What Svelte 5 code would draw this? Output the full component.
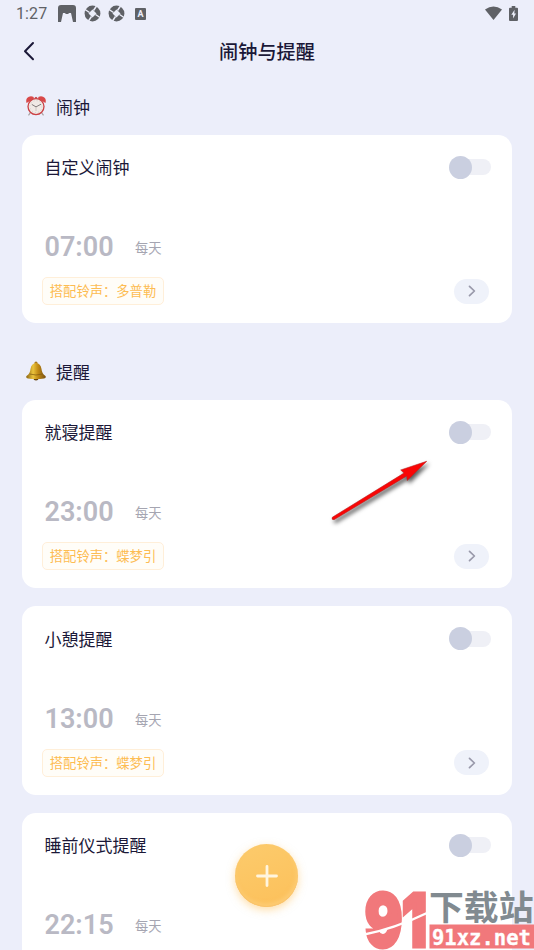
<script>
    let groups = [
        {
            icon: 'clock',
            title: '闹钟',
            items: [{ name: '自定义闹钟', time: '07:00', sound: '多普勒', on: false }]
        },
        {
            icon: 'bell',
            title: '提醒',
            items: [
                { name: '就寝提醒', time: '23:00', sound: '蝶梦引', on: false },
                { name: '小憩提醒', time: '13:00', sound: '蝶梦引', on: false },
                { name: '睡前仪式提醒', time: '22:15', sound: '蝶梦引', on: false }
            ]
        }
    ];

    function toggle(item) {
        item.on = !item.on;
        groups = groups;
    }
</script>

<div class="screen">
    <div class="status">
        <span class="clock">1:27</span>
        <svg class="cat" width="18" height="18" viewBox="0 0 18 18">
            <path d="M3 0h12q3 0 3 3v14h-3L13 8h-1.800L10 9H8L6.800 8H5L3 17H0V3q0-3 3-3z" fill="#5f6166" />
        </svg>
        {#each [1, 2] as n}
            <svg class="shutter" width="17" height="17" viewBox="0 0 17 17">
                <circle cx="8.500" cy="8.500" r="7.900" fill="#5f6166" />
                <path d="M8.500 4.500l4 4-4 4-4-4z" fill="#eceefa" />
                <path d="M1 4.500l4.500 3M12.500 1l-3 4.500M16 12.500l-4.500-3M4.500 16l3-4.500" stroke="#eceefa" stroke-width="1.500" />
            </svg>
        {/each}
        <span class="abox">A</span>
        <svg class="wifi" width="17" height="14" viewBox="0 0 17 14">
            <path d="M0 3.500Q8.500-2.500 17 3.500L8.500 14z" fill="#5f6166" />
        </svg>
        <svg width="9" height="15" viewBox="0 0 9 15">
            <path d="M1 1.800h1.700V0h3.600v1.800H8q1 0 1 1V14q0 1-1 1H1q-1 0-1-1V2.800q0-1 1-1z" fill="#5f6166" />
            <path d="M5.600 3.800L2.300 8.700h1.800v3.800l2.900-5H5.300z" fill="#eceefa" />
        </svg>
    </div>

    <header>
        <svg class="back" width="12" height="20" viewBox="0 0 12 20">
            <path d="M10 2L2 10.200l8 8" fill="none" stroke="#1b1838" stroke-width="2" stroke-linecap="round" stroke-linejoin="round" />
        </svg>
        <h1>闹钟与提醒</h1>
    </header>

    {#each groups as group}
        <section>
            <h2>
                {#if group.icon === 'clock'}
                    <svg width="20" height="20" viewBox="0 0 20 20">
                        <path d="M4.500 16.500L2.500 19.300M15.500 16.500l2 2.800" stroke="#a89f9f" stroke-width="1.200" />
                        <path d="M.5 7Q-1 .8 5 .2q2.800 0 3.300 2.300zM19.500 7Q21 .8 15 .2q-2.800 0-3.300 2.300z" fill="#d94848" />
                        <path d="M8.500 2L10 .8 11.500 2v2h-3z" fill="#bd3038" />
                        <circle cx="10" cy="10.600" r="8" fill="#f0e9e5" stroke="#cb4145" stroke-width="1.300" />
                        <circle cx="10" cy="10.600" r="6" fill="none" stroke="#c7beb9" stroke-width=".8" stroke-dasharray=".8 2.340" />
                        <path d="M5.800 8.400l4.200 2.500 5-2.700" fill="none" stroke="#67605f" stroke-width=".8" />
                        <path d="M10 11v4" stroke="#b9b0ad" stroke-width=".6" />
                    </svg>
                {:else}
                    <svg width="20" height="20" viewBox="0 0 20 20">
                        <defs>
                            <linearGradient id="gold">
                                <stop offset="0" stop-color="#8d6510" />
                                <stop offset=".35" stop-color="#eac33c" />
                                <stop offset=".6" stop-color="#c28b15" />
                                <stop offset="1" stop-color="#795012" />
                            </linearGradient>
                        </defs>
                        <circle cx="10" cy="2" r="1.600" fill="#a8791b" />
                        <ellipse cx="10" cy="17.700" rx="2.500" ry="1.800" fill="#66440d" />
                        <path d="M10 2Q5.300 2.500 4.500 8 4 13 .5 15q-1 2 1.500 2.400 8 1.400 16 0Q20.500 17 19.500 15 16 13 15.500 8 14.700 2.500 10 2z" fill="url(#gold)" />
                        <path d="M3.500 13q6.500 2 13 0" fill="none" stroke="#80590f" stroke-width=".7" />
                    </svg>
                {/if}
                {group.title}
            </h2>
            {#each group.items as item}
                <div class="card">
                    <div class="row">
                        <span class="name">{item.name}</span>
                        <button class="switch" class:on={item.on} aria-label={item.name} on:click={() => toggle(item)}>
                            <i></i>
                        </button>
                    </div>
                    <div class="when">
                        <span class="time">{item.time}</span>
                        <span class="repeat">每天</span>
                    </div>
                    <div class="row bottom">
                        <span class="tag">搭配铃声：{item.sound}</span>
                        <span class="more">
                            <svg width="8" height="12" viewBox="0 0 8 12">
                                <path d="M1.500 1.300L6.400 6l-4.900 4.700" fill="none" stroke="#9999aa" stroke-width="1.700" stroke-linecap="round" stroke-linejoin="round" />
                            </svg>
                        </span>
                    </div>
                </div>
            {/each}
        </section>
    {/each}

    <button class="add" aria-label="+">
        <svg width="22" height="22" viewBox="0 0 22 22">
            <path d="M11 1.500v19M1.500 11h19" stroke="#fff5df" stroke-width="2.800" stroke-linecap="round" />
        </svg>
    </button>

    <svg class="arrow" width="110" height="76" viewBox="325 455 110 76">
        <path d="M332.300 517.300l71.700-44.200-3.300-3.100 26-8.700-19.500 19.200-.4-4.600-72.800 43.800q-2.800.2-1.700-2.400z" fill="#f90505" stroke="#b22" stroke-width=".6" />
    </svg>

    <svg class="mark" width="172" height="64" viewBox="362 886 172 64">
        <text x="365" y="946" font-size="72" font-weight="800" font-family="Inter" fill="#f1787b" stroke="#f1787b" stroke-width="5" textLength="62" lengthAdjust="spacingAndGlyphs">91</text>
        <path d="M362 935q32-6 65-22" fill="none" stroke="#fff" stroke-width="2.500" />
        <text x="429" y="920" font-size="34.500" font-weight="bold" font-family="Noto Sans CJK SC" fill="#818a90" textLength="104.500" lengthAdjust="spacingAndGlyphs">下载站</text>
        <rect x="429.500" y="924.500" width="104.500" height="24" fill="#f1787b" />
        <text x="432" y="944.500" font-size="21" font-weight="bold" font-family="DejaVu Sans Mono" fill="#fff" stroke="#fff" stroke-width=".3" textLength="99" lengthAdjust="spacingAndGlyphs">91xz.net</text>
    </svg>
</div>

<style>
    :global(body) {
        background: #eceefa;
        overflow: hidden;
    }

    .screen {
        position: relative;
        height: 950px;
        overflow: hidden;
        background: #eceefa;
        color: #1b1838;
        font-family: Roboto, "Noto Sans CJK SC", sans-serif;
    }

    .status {
        display: flex;
        align-items: center;
        height: 27px;
        padding: 0 16px;
    }

    .clock {
        width: 42px;
        font-size: 16px;
        letter-spacing: 0.1px;
        color: #5f6166;
    }

    .shutter {
        margin-left: 7.5px;
    }

    .abox {
        width: 11px;
        height: 12px;
        margin-left: 10px;
        border-radius: 1px;
        background: #5f6166;
        color: #eceefa;
        font-size: 9px;
        font-weight: bold;
        line-height: 12px;
        text-align: center;
    }

    .wifi {
        margin-left: auto;
        margin-right: 7px;
        margin-bottom: 1px;
    }

    .status > :last-child {
        margin-bottom: 1px;
    }

    header {
        box-sizing: border-box;
        display: flex;
        align-items: center;
        height: 49.3px;
        padding: 0 23px 2px;
    }

    h1 {
        flex: 1;
        margin: 0 12px 0 0;
        font-size: 19.2px;
        font-weight: 500;
        text-align: center;
    }

    section {
        padding: 0 22px;
    }

    h2 {
        box-sizing: border-box;
        display: flex;
        align-items: center;
        gap: 10px;
        height: 58.7px;
        margin: 0;
        padding: 1px 4px 0;
        font-size: 17px;
        font-weight: 400;
    }

    h2 svg {
        flex: none;
    }

    .card {
        box-sizing: border-box;
        height: 188.4px;
        margin-bottom: 18px;
        padding: 16.4px 21px 0 20px;
        border-radius: 14px;
        background: #fff;
    }

    .row {
        display: flex;
        align-items: center;
        justify-content: space-between;
        height: 32px;
    }

    .name {
        padding: 0 0 1px 2.5px;
        font-size: 17px;
    }

    .switch {
        display: flex;
        align-items: center;
        width: 37px;
        height: 16px;
        padding: 0;
        border: 0;
        border-radius: 8px;
        background: #eff0f6;
    }

    .switch i {
        flex: none;
        width: 23px;
        height: 23px;
        margin-left: -5px;
        border-radius: 50%;
        background: #cacfe0;
    }

    .switch.on i {
        margin-left: 19px;
        background: #fdc55f;
    }

    .when {
        display: flex;
        align-items: center;
        height: 32px;
        margin-top: 48px;
        padding-left: 2.5px;
    }

    .time {
        width: 90.5px;
        font-size: 27px;
        font-weight: 600;
        color: #b9b9c4;
    }

    .repeat {
        padding-top: 1px;
        font-size: 13.3px;
        color: #a5a5b1;
    }

    .bottom {
        margin-top: 12px;
        padding-right: 2px;
    }

    .tag {
        box-sizing: border-box;
        width: 122px;
        height: 28px;
        border: 1px solid #ffefd9;
        border-radius: 5px;
        background: #fffdf8;
        color: #fdbc52;
        font-size: 13.3px;
        line-height: 27px;
        text-align: center;
        white-space: nowrap;
    }

    .more {
        display: flex;
        align-items: center;
        justify-content: center;
        width: 35px;
        height: 25px;
        border-radius: 13px;
        background: #eff2fa;
    }

    .add {
        position: absolute;
        left: 235px;
        top: 844px;
        display: flex;
        align-items: center;
        justify-content: center;
        width: 63px;
        height: 63px;
        padding: 0;
        border: 0;
        border-radius: 50%;
        background: linear-gradient(160deg, #fccb6c, #fcc05a);
        box-shadow: 0 3px 9px rgba(253, 190, 82, 0.5), inset -1px -3px 4px rgba(255, 218, 145, 0.5), inset 0 -1px 1px #f5b24b;
    }

    .arrow {
        position: absolute;
        left: 325px;
        top: 455px;
        filter: drop-shadow(2px 3px 2px rgba(0, 0, 0, 0.65));
    }

    .mark {
        position: absolute;
        right: 0;
        bottom: 0;
    }
</style>
